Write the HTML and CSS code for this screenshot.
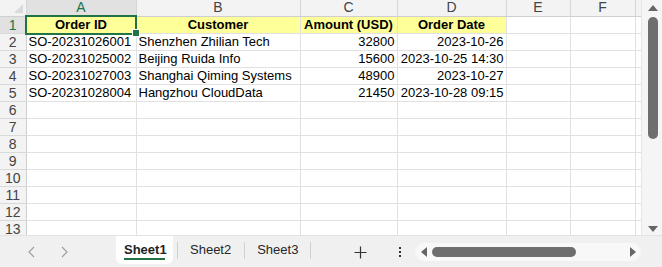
FILE: index.html
```html
<!DOCTYPE html>
<html>
<head>
<meta charset="utf-8">
<link rel="stylesheet" href="styles.css">
</head>
<body>
<div class="app">
  <div class="main">
    <div class="grid-wrap">
      <table class="grid">
        <colgroup>
          <col class="w-rh"><col class="w-a"><col class="w-b"><col class="w-c"><col class="w-d"><col class="w-e"><col class="w-f"><col class="w-g">
        </colgroup>
        <thead>
          <tr class="colhead">
            <th class="corner"><span class="tri"></span></th>
            <th class="sel">A</th><th>B</th><th>C</th><th>D</th><th>E</th><th>F</th><th></th>
          </tr>
        </thead>
        <tbody>
          <tr><th class="rh sel">1</th><td class="hd active">Order ID<span class="handle"></span></td><td class="hd">Customer</td><td class="hd">Amount (USD)</td><td class="hd">Order Date</td><td></td><td></td><td></td></tr>
          <tr><th class="rh">2</th><td>SO-20231026001</td><td>Shenzhen Zhilian Tech</td><td class="r">32800</td><td class="r">2023-10-26</td><td></td><td></td><td></td></tr>
          <tr><th class="rh">3</th><td>SO-20231025002</td><td>Beijing Ruida Info</td><td class="r">15600</td><td class="r">2023-10-25 14:30</td><td></td><td></td><td></td></tr>
          <tr><th class="rh">4</th><td>SO-20231027003</td><td>Shanghai Qiming Systems</td><td class="r">48900</td><td class="r">2023-10-27</td><td></td><td></td><td></td></tr>
          <tr><th class="rh">5</th><td>SO-20231028004</td><td>Hangzhou CloudData</td><td class="r">21450</td><td class="r">2023-10-28 09:15</td><td></td><td></td><td></td></tr>
          <tr><th class="rh">6</th><td></td><td></td><td></td><td></td><td></td><td></td><td></td></tr>
          <tr><th class="rh">7</th><td></td><td></td><td></td><td></td><td></td><td></td><td></td></tr>
          <tr><th class="rh">8</th><td></td><td></td><td></td><td></td><td></td><td></td><td></td></tr>
          <tr><th class="rh">9</th><td></td><td></td><td></td><td></td><td></td><td></td><td></td></tr>
          <tr><th class="rh">10</th><td></td><td></td><td></td><td></td><td></td><td></td><td></td></tr>
          <tr><th class="rh">11</th><td></td><td></td><td></td><td></td><td></td><td></td><td></td></tr>
          <tr><th class="rh">12</th><td></td><td></td><td></td><td></td><td></td><td></td><td></td></tr>
          <tr><th class="rh">13</th><td></td><td></td><td></td><td></td><td></td><td></td><td></td></tr>
        </tbody>
      </table>
    </div>
    <div class="vscroll">
      <span class="arrow-up"></span>
      <span class="vthumb"></span>
      <span class="arrow-down"></span>
    </div>
  </div>
  <div class="tabbar">
    <div class="nav">
      <svg width="10" height="12" viewBox="0 0 10 12"><path d="M7 1 L2 6 L7 11" fill="none" stroke="#a0a0a0" stroke-width="1.2"/></svg>
      <svg width="10" height="12" viewBox="0 0 10 12"><path d="M3 1 L8 6 L3 11" fill="none" stroke="#a0a0a0" stroke-width="1.2"/></svg>
    </div>
    <div class="tabs">
      <div class="tab active">Sheet1</div>
      <div class="tab">Sheet2</div>
      <div class="tab">Sheet3</div>
    </div>
    <div class="plus">
      <svg width="13" height="13" viewBox="0 0 13 13"><path d="M6.5 0.5 V12.5 M0.5 6.5 H12.5" stroke="#333" stroke-width="1.2"/></svg>
    </div>
    <div class="more"><span></span><span></span><span></span></div>
    <div class="hscroll">
      <span class="arrow-left"></span>
      <span class="hthumb"></span>
      <span class="arrow-right"></span>
    </div>
  </div>
</div>
</body>
</html>
```
FILE: styles.css
```css
* { box-sizing: border-box; }
html, body { margin: 0; padding: 0; background: #fff; }
body { width: 662px; height: 267px; overflow: hidden; font-family: "Liberation Sans", Arial, sans-serif; }
.app { display: flex; flex-direction: column; width: 662px; height: 267px; }
.main { display: flex; height: 235px; overflow: hidden; }
.grid-wrap { width: 641px; height: 235px; overflow: hidden; }
.grid { border-collapse: collapse; table-layout: fixed; width: 641px; font-size: 13px; color: #000; }
.w-rh { width: 26px; } .w-a { width: 110px; } .w-b { width: 164px; } .w-c { width: 97px; }
.w-d { width: 109px; } .w-e { width: 64px; } .w-f { width: 65px; } .w-g { width: 6px; }
.grid th, .grid td { padding: 0 2px; border-right: 1px solid #e1e1e1; border-bottom: 1px solid #e1e1e1; white-space: nowrap; overflow: hidden; }
.grid td { height: 17px; line-height: 16px; }
.colhead th { height: 16px; line-height: 15px; background: #f3f3f3; font-weight: normal; color: #444; font-size: 14px; text-align: center; border-right-color: #d6d6d6; border-bottom: 1px solid #cfcfcf; }
.colhead th.sel { background: #e1e1e1; color: #217346; border-bottom: 2px solid #217346; }
.corner { position: relative; }
.tri { position: absolute; right: 3px; bottom: 3px; width: 0; height: 0; border-left: 9px solid transparent; border-bottom: 9px solid #dadada; }
.rh { background: #f3f3f3; font-weight: normal; color: #444; font-size: 14px; text-align: center; border-right: 1px solid #cfcfcf !important; border-bottom-color: #d9d9d9 !important; line-height: 16px; padding: 0 !important; }
.rh.sel { background: #e1e1e1; color: #217346; }
td.hd { background: #ffff99; font-weight: bold; text-align: center; }
td.r { text-align: right; }
td.active { position: relative; overflow: visible; outline: 2px solid #217346; outline-offset: -1px; }
.handle { position: absolute; right: -4px; bottom: -4px; width: 6px; height: 6px; background: #217346; border: 1px solid #fff; box-sizing: content-box; z-index: 2; }
.vscroll { width: 21px; height: 235px; background: #f5f5f5; border-left: 1px solid #e6e6e6; position: relative; }
.arrow-up { position: absolute; left: 6px; top: 5px; width: 0; height: 0; border-left: 5px solid transparent; border-right: 5px solid transparent; border-bottom: 6px solid #666; }
.arrow-down { position: absolute; left: 6px; top: 226px; width: 0; height: 0; border-left: 5px solid transparent; border-right: 5px solid transparent; border-top: 6px solid #666; }
.vthumb { position: absolute; left: 6px; top: 17px; width: 10px; height: 122px; border-radius: 5px; background: #6e6e6e; }
.tabbar { height: 32px; background: #f0f0f0; display: flex; align-items: flex-start; border-top: 1px solid #e3e3e3; }
.nav { display: flex; gap: 22px; padding: 10px 0 0 27px; width: 116px; }
.tabs { display: flex; height: 28px; }
.tab { font-size: 13px; color: #262626; padding: 0 13px; line-height: 28px; position: relative; }
.tab + .tab::before { content: ""; position: absolute; left: 0; top: 6px; height: 17px; border-left: 1px solid #d0d0d0; }
.tab:last-child::after { content: ""; position: absolute; right: 0; top: 6px; height: 17px; border-left: 1px solid #d0d0d0; }
.tab.active { background: #fff; font-weight: bold; color: #222; border-radius: 0 0 6px 6px; padding: 0 8px; margin-right: 4px; width: 57px; text-align: center; }
.tab.active::after { content: ""; position: absolute; left: 8px; right: 8px; bottom: 4px; height: 2px; background: #217346; }
.plus { padding: 9px 0 0 0; margin-left: 43px; }
.more { display: flex; flex-direction: column; gap: 2px; margin: 11px 0 0 32px; }
.more span { width: 2px; height: 2px; background: #333; }
.hscroll { position: relative; margin: 7px 0 0 14px; width: 226px; height: 18px; background: #f8f8f8; border-radius: 9px; }
.arrow-left { position: absolute; left: 6px; top: 4px; width: 0; height: 0; border-top: 5px solid transparent; border-bottom: 5px solid transparent; border-right: 6px solid #666; }
.arrow-right { position: absolute; left: 215px; top: 4px; width: 0; height: 0; border-top: 5px solid transparent; border-bottom: 5px solid transparent; border-left: 6px solid #666; }
.hthumb { position: absolute; left: 17px; top: 4px; width: 144px; height: 10px; border-radius: 5px; background: #6e6e6e; }
```
